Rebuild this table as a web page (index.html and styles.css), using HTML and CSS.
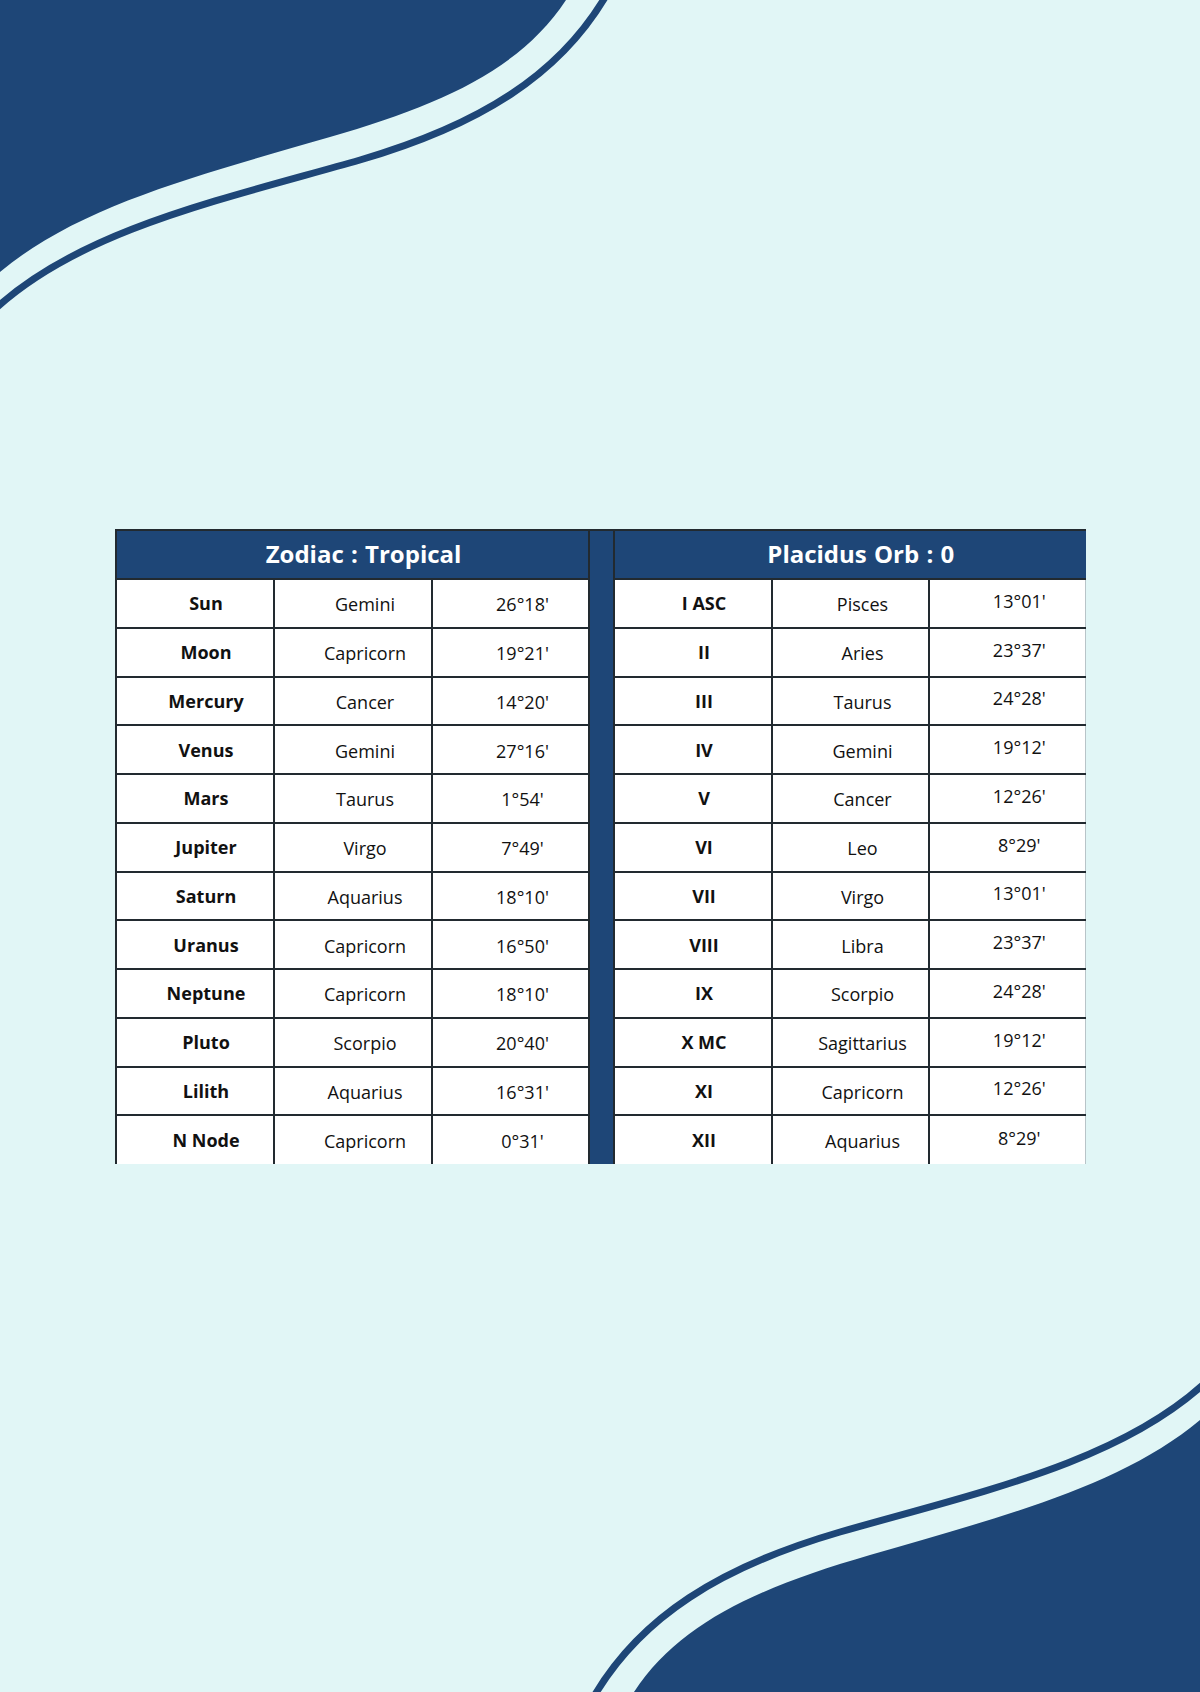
FILE: index.html
```html
<!DOCTYPE html>
<html lang="en">
<head>
<meta charset="utf-8">
<title>Natal Chart Table</title>
<link rel="stylesheet" href="styles.css">
</head>
<body>
<div class="page">
  <svg class="waves" viewBox="0 0 1200 1692" width="1200" height="1692" aria-hidden="true">
    <g class="wave">
      <path class="wave-fill" d="M0,0 H566 C520,70 440,105 330,137 C200,175 80,205 0,272 Z"/>
      <path class="wave-line" d="M607,-6 C560,75 480,125 360,160 C220,200 80,230 -6,310"/>
    </g>
    <g class="wave" transform="rotate(180 600 846)">
      <path class="wave-fill" d="M0,0 H566 C520,70 440,105 330,137 C200,175 80,205 0,272 Z"/>
      <path class="wave-line" d="M607,-6 C560,75 480,125 360,160 C220,200 80,230 -6,310"/>
    </g>
  </svg>

  <main class="content">
    <table class="chart">
      <colgroup>
        <col class="c-name"><col class="c-sign"><col class="c-deg">
        <col class="c-gap">
        <col class="c-name"><col class="c-sign2"><col class="c-deg2">
      </colgroup>
      <tbody>
        <tr class="head-row">
          <th colspan="3">Zodiac : Tropical</th>
          <th class="gap" rowspan="13"></th>
          <th colspan="3" class="last">Placidus Orb : 0</th>
        </tr>
        <tr><td class="name">Sun</td><td>Gemini</td><td>26°18'</td><td class="name">I ASC</td><td>Pisces</td><td class="deg-r last">13°01'</td></tr>
        <tr><td class="name">Moon</td><td>Capricorn</td><td>19°21'</td><td class="name">II</td><td>Aries</td><td class="deg-r last">23°37'</td></tr>
        <tr><td class="name">Mercury</td><td>Cancer</td><td>14°20'</td><td class="name">III</td><td>Taurus</td><td class="deg-r last">24°28'</td></tr>
        <tr><td class="name">Venus</td><td>Gemini</td><td>27°16'</td><td class="name">IV</td><td>Gemini</td><td class="deg-r last">19°12'</td></tr>
        <tr><td class="name">Mars</td><td>Taurus</td><td>1°54'</td><td class="name">V</td><td>Cancer</td><td class="deg-r last">12°26'</td></tr>
        <tr><td class="name">Jupiter</td><td>Virgo</td><td>7°49'</td><td class="name">VI</td><td>Leo</td><td class="deg-r last">8°29'</td></tr>
        <tr><td class="name">Saturn</td><td>Aquarius</td><td>18°10'</td><td class="name">VII</td><td>Virgo</td><td class="deg-r last">13°01'</td></tr>
        <tr><td class="name">Uranus</td><td>Capricorn</td><td>16°50'</td><td class="name">VIII</td><td>Libra</td><td class="deg-r last">23°37'</td></tr>
        <tr><td class="name">Neptune</td><td>Capricorn</td><td>18°10'</td><td class="name">IX</td><td>Scorpio</td><td class="deg-r last">24°28'</td></tr>
        <tr><td class="name">Pluto</td><td>Scorpio</td><td>20°40'</td><td class="name">X MC</td><td>Sagittarius</td><td class="deg-r last">19°12'</td></tr>
        <tr><td class="name">Lilith</td><td>Aquarius</td><td>16°31'</td><td class="name">XI</td><td>Capricorn</td><td class="deg-r last">12°26'</td></tr>
        <tr class="final"><td class="name">N Node</td><td>Capricorn</td><td>0°31'</td><td class="name">XII</td><td>Aquarius</td><td class="deg-r last">8°29'</td></tr>
      </tbody>
    </table>
  </main>
</div>
</body>
</html>
```

FILE: styles.css
```css
* { box-sizing: border-box; }

html, body {
  margin: 0;
  padding: 0;
  background: #e1f6f6;
}

body {
  font-family: "Open Sans", "Noto Sans", "Liberation Sans", sans-serif;
  color: #111;
}

.page {
  position: relative;
  width: 1200px;
  height: 1692px;
  overflow: hidden;
  background: #e1f6f6;
}

.waves {
  position: absolute;
  left: 0;
  top: 0;
  display: block;
}

.wave-fill { fill: #1e4677; }
.wave-line {
  fill: none;
  stroke: #1e4677;
  stroke-width: 7;
}

.content {
  position: relative;
  padding: 529px 0 0 115px;
}

.chart {
  border-collapse: collapse;
  table-layout: fixed;
  width: 969px;
}

.c-name { width: 158px; }
.c-sign { width: 158px; }
.c-deg { width: 157px; }
.c-gap { width: 25px; }
.c-sign2 { width: 157px; }
.c-deg2 { width: 156px; }

.chart th,
.chart td {
  border: 2px solid #222a30;
  padding: 0 0 0 24px;
  text-align: center;
  vertical-align: middle;
  white-space: nowrap;
}

.head-row th {
  height: 49px;
  background: #1e4677;
  color: #ffffff;
  font-size: 24px;
  font-weight: 700;
  word-spacing: 1px;
  padding: 0 0 2px 22px;
}

.chart th.gap {
  background: #1e4677;
  padding: 0;
  border-bottom: none;
}

.chart td {
  height: 48.75px;
  background: #ffffff;
  font-size: 18px;
  font-weight: 400;
  padding-top: 2px;
}

.chart td.name {
  font-weight: 700;
  font-size: 18px;
  padding-left: 22px;
  padding-top: 0;
}

.chart td.deg-r {
  padding-top: 0;
  padding-bottom: 5px;
}

.chart .last {
  border-right: 1px solid #b8c4c8;
}

.chart th.last {
  border-right: 1px solid #1e4677;
}

.chart tr.final td {
  border-bottom: none;
}
```
